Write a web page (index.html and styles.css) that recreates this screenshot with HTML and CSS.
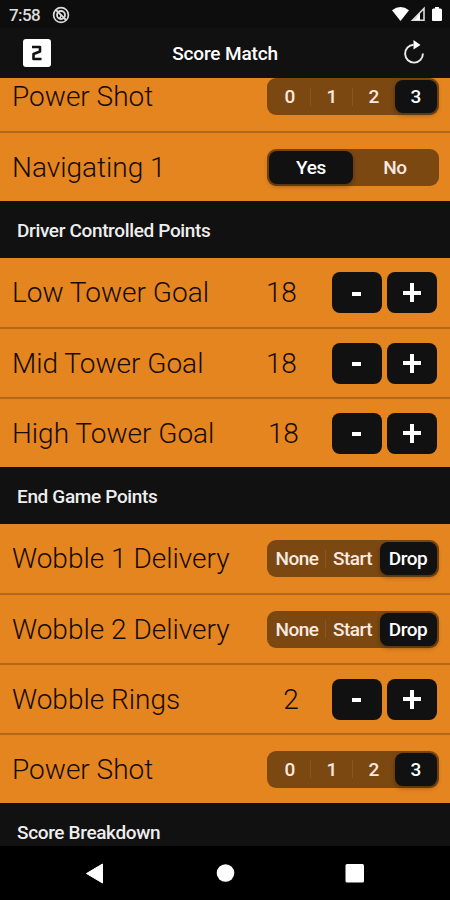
FILE: index.html
```html
<!DOCTYPE html>
<html lang="en">
<head>
<meta charset="utf-8">
<title>Score Match</title>
<link rel="stylesheet" href="styles.css">
</head>
<body>
<div class="phone">
  <div class="status">
    <span class="time">7:58</span>
    <svg class="dnd" width="18" height="18" viewBox="0 0 18 18" fill="none" stroke="#ddd"><circle cx="9" cy="9" r="7.4" stroke-width="1.7"/><circle cx="9" cy="9" r="4" stroke-width="1.8"/><path d="M4 4l10 10" stroke-width="1.8"/><path d="M9 9l-3 4h3z" fill="#ddd" stroke="none"/></svg>
    <svg class="signals" width="52" height="17" viewBox="0 0 52 17" fill="#fff"><path d="M0 4.200Q8.500-2 17 4.200L8.500 15z"/><path d="M20.500 14.300L32 2.500V14.300z" fill="none" stroke="#ddd" stroke-width="1.600"/><path d="M28 7V14H22z"/><path d="M40 4Q40 2.500 41.500 2.500H43V1h4v1.500h1.500Q50 2.500 50 4V14q0 1-1 1h-8q-1 0-1-1z"/></svg>
  </div>
  <header class="appbar">
    <svg class="logo" width="30" height="30" viewBox="0 0 30 30"><rect x="1" y="1" width="28" height="28" rx="3" fill="#fff"/><path d="M10 9h8V13.500L11.500 16V21h8" fill="none" stroke="#111" stroke-width="2.600" stroke-linejoin="round"/></svg>
    <h1 class="title">Score Match</h1>
    <svg class="reload" width="22" height="26" viewBox="0 0 22 26"><path d="M10.500 4.800A8.900 8.900 0 1 0 19.900 13.500" fill="none" stroke="#eee" stroke-width="1.900"/><path d="M10.500 0L17.500 4.900 10.500 9.500z" fill="#fff"/></svg>
  </header>
  <main class="scroll">
    <div class="list">
      <div class="row"><span class="label">Power Shot</span><div class="seg nums"><span>0</span><span>1</span><span>2</span><span class="on">3</span></div></div>
      <div class="row"><span class="label">Navigating 1</span><div class="seg yesno"><span class="on">Yes</span><span>No</span></div></div>
      <h2 class="section">Driver Controlled Points</h2>
      <div class="row"><span class="label">Low Tower Goal</span><span class="count a">18</span><div class="step"><b class="minus"></b><b class="plus"></b></div></div>
      <div class="row"><span class="label">Mid Tower Goal</span><span class="count a">18</span><div class="step"><b class="minus"></b><b class="plus"></b></div></div>
      <div class="row"><span class="label">High Tower Goal</span><span class="count b">18</span><div class="step"><b class="minus"></b><b class="plus"></b></div></div>
      <h2 class="section">End Game Points</h2>
      <div class="row"><span class="label">Wobble 1 Delivery</span><div class="seg words"><span>None</span><span>Start</span><span class="on">Drop</span></div></div>
      <div class="row"><span class="label">Wobble 2 Delivery</span><div class="seg words"><span>None</span><span>Start</span><span class="on">Drop</span></div></div>
      <div class="row"><span class="label">Wobble Rings</span><span class="count b">2</span><div class="step"><b class="minus"></b><b class="plus"></b></div></div>
      <div class="row"><span class="label">Power Shot</span><div class="seg nums"><span>0</span><span>1</span><span>2</span><span class="on">3</span></div></div>
      <h2 class="section">Score Breakdown</h2>
    </div>
  </main>
  <nav class="sysnav">
    <svg width="450" height="54" viewBox="0 0 450 54" fill="#fff"><path d="M86.500 27.500L102.500 18V37z" stroke="#fff" stroke-linejoin="round"/><circle cx="225.500" cy="27" r="8.800"/><rect x="345.500" y="18" width="18.500" height="18.500" rx="1.500"/></svg>
  </nav>
</div>
</body>
</html>
```
FILE: styles.css
```css
* { box-sizing: border-box; }
body { margin: 0; font-family: Roboto, sans-serif; background: #111; }
.phone { width: 450px; height: 900px; display: flex; flex-direction: column; overflow: hidden; }
.status { height: 28px; flex: none; display: flex; align-items: center; padding: 1px 6px 0 9px; background: #0d0d0d; color: #ddd; }
.time { font-size: 17px; font-weight: 500; letter-spacing: -0.6px; width: 43px; }
.signals { margin-left: auto; }
.appbar { height: 50px; flex: none; display: grid; grid-template-columns: 60px 1fr 60px; align-items: center; background: #111; padding: 0 14px 0 22px; }
.title { margin: 0; padding-right: 8px; text-align: center; color: #fff; font-size: 19px; font-weight: 500; letter-spacing: -0.15px; }
.reload { justify-self: end; margin-right: 11px; }
.scroll { flex: 1; min-height: 0; overflow: hidden; }
.list { margin-top: -16px; }
.row { height: 70px; display: flex; align-items: center; padding: 0 11px 0 12px; background: #e5851f; border-bottom: 1px solid #b5681a; }
.row + .row { border-top: 1px solid #b5681a; }
.label { font-size: 28px; font-weight: 300; color: #160b02; white-space: nowrap; margin-right: auto; }
.count { font-size: 28px; font-weight: 300; letter-spacing: -0.3px; color: #160b02; }
.count.a { margin-right: 35px; }
.count.b { margin-right: 33px; }
.section { margin: -1px 0 0; height: 57px; display: flex; align-items: center; padding: 1px 0 0 17px; background: #111; color: #eee; font-size: 19px; font-weight: 500; letter-spacing: -0.35px; }
.seg { width: 172px; height: 37px; border-radius: 9px; background: #7c4812; display: grid; padding: 2px; color: #fbe9e0; font-size: 19px; font-weight: 500; }
.nums { grid-template-columns: repeat(4, 1fr); }
.yesno { grid-template-columns: 1fr 1fr; letter-spacing: -0.3px; }
.words { grid-template-columns: 57px 54px 57px; letter-spacing: -0.5px; }
.seg span { display: flex; align-items: center; justify-content: center; }
.words span { padding-right: 1px; }
.seg .on { background: #111; color: #fff; border-radius: 8px; box-shadow: 0 2px 5px #0005; }
.nums span:nth-child(-n+2), .words span:first-child { background: linear-gradient(#8d5522, #8d5522) right center / 1px 18px no-repeat; }
.step { display: flex; gap: 5px; margin-right: 2.5px; }
.step b { width: 50px; height: 41px; border-radius: 8px; background: #111; display: grid; place-items: center; }
.step b::before, .step b::after { content: ""; grid-area: 1 / 1; background: #fff; }
.minus::before { width: 9px; height: 4px; margin-top: 2px; }
.plus::before { width: 18px; height: 4px; }
.plus::after { width: 4px; height: 19px; }
.sysnav { height: 54px; flex: none; background: #000; }
```
